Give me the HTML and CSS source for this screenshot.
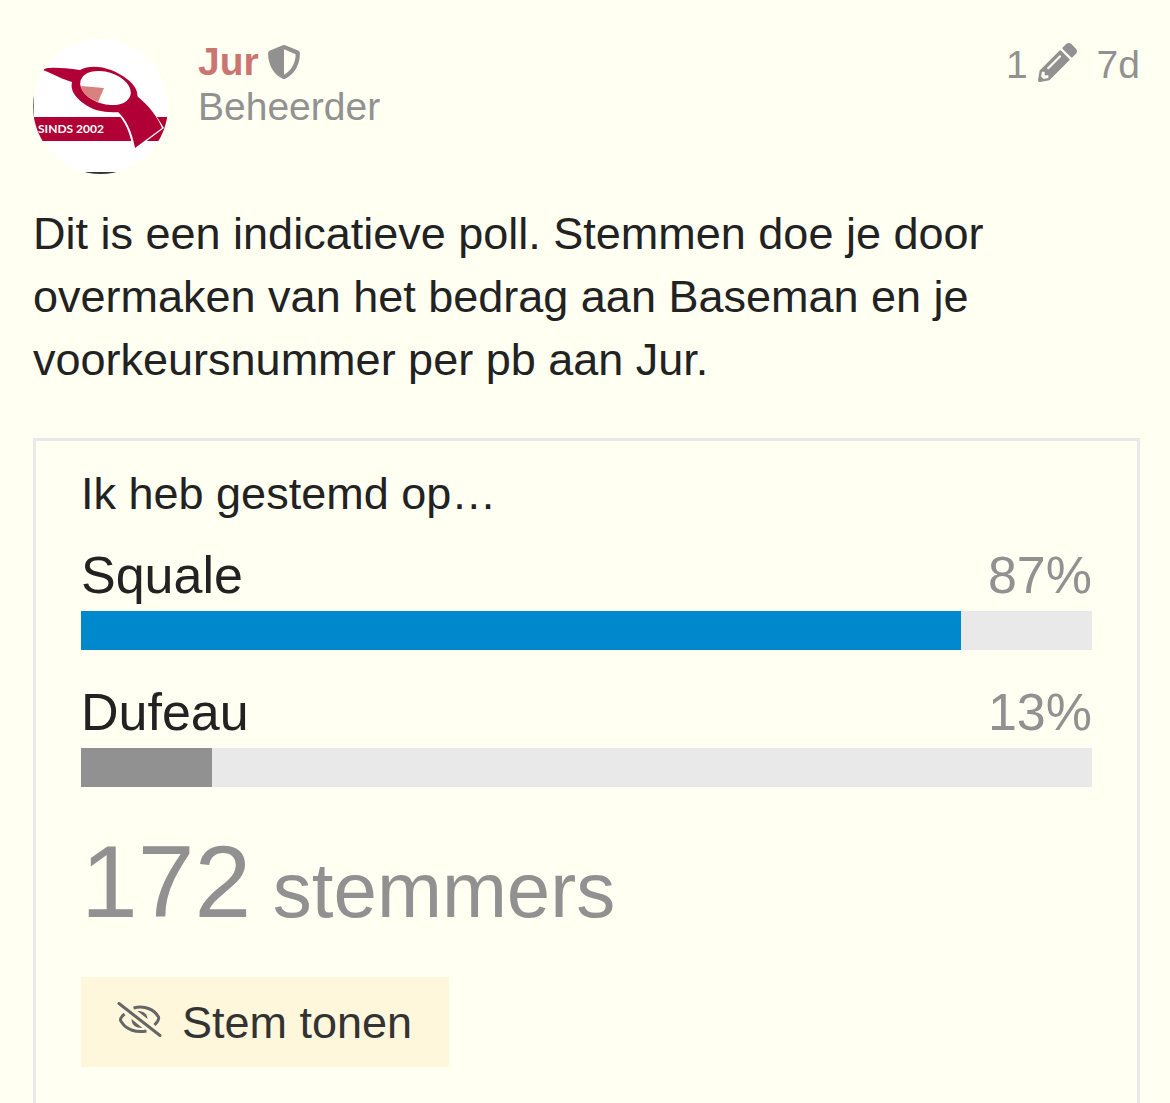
FILE: index.html
```html
<!DOCTYPE html>
<html lang="nl">
<head>
<meta charset="utf-8">
<meta name="viewport" content="width=device-width, initial-scale=1">
<title>Indicatieve poll</title>
<link rel="stylesheet" href="styles.css">
</head>
<body>
<article class="post">
  <header class="post-header">
    <svg class="avatar" viewBox="0 0 135 135" role="img" aria-label="Jur">
      <defs><clipPath id="round"><circle cx="67.500" cy="67.500" r="67.500"/></clipPath></defs>
      <g clip-path="url(#round)">
        <rect width="135" height="135" fill="#fff"/>
        <path d="M0 78H135V102H0Z" fill="#b00035"/>
        <path d="M0 55H1V78H0Z" fill="#777"/>
        <path d="M45 133H90V135H45Z" fill="#34343c"/>
        <path d="M83 73C92 82 97 93 100 110L103 110L131 89L124 78L106 58Z" fill="#fff"/>
        <path d="M84 72C94 81 99 93 102 109L129 89C124 77 116 67 104 57Z" fill="#b00035"/>
        <path d="M10 31C12 28 26 28 47 31C60 24 80 29 94 40C102 46 106 53 104 61L86 73C73 74 60 72 50 64C42 58 37 51 39 43C31 41 20 35 10 31Z" fill="#b00035"/>
        <ellipse cx="72.500" cy="49" rx="26" ry="16" transform="rotate(17 72.500 49)" fill="#fff"/>
        <path d="M48 47L71 49L65 63C57 60 49 55 48 47Z" fill="#d9827d"/>
        <text class="avatar-text" x="5" y="94">SINDS 2002</text>
      </g>
    </svg>
    <div class="author">
      <div class="author-name">
        <a class="name" href="#jur">Jur</a>
        <svg class="shield" viewBox="0 0 512 512" role="img" aria-label="Beheerder"><path fill="currentColor" d="M466.500 83.700l-192-80a48.150 48.150 0 0 0-36.900 0l-192 80C27.700 91.100 16 108.600 16 128c0 198.500 114.500 335.700 221.500 380.300 11.800 4.900 25.100 4.900 36.900 0C360.100 472.600 496 349.300 496 128c0-19.400-11.700-36.900-29.500-44.300zM256.100 446.300l-.1-381 175.900 73.300c-3.300 151.400-82.100 261.100-175.800 307.700z"/></svg>
      </div>
      <div class="role">Beheerder</div>
    </div>
    <div class="post-info">
      <button class="edits" type="button" aria-label="1 bewerking">1
        <svg class="pencil" viewBox="0 0 512 512" aria-hidden="true"><path fill="currentColor" d="M497.900 142.100l-46.100 46.100c-4.700 4.700-12.300 4.700-17 0l-111-111c-4.700-4.700-4.700-12.300 0-17l46.100-46.100c18.700-18.700 49.100-18.700 67.900 0l60.100 60.100c18.800 18.700 18.800 49.100 0 68zM284.200 99.800L21.600 362.400.4 483.900c-2.900 16.400 11.400 30.600 27.800 27.800l121.500-21.300 262.600-262.600c4.700-4.700 4.700-12.300 0-17l-111-111c-4.800-4.700-12.400-4.700-17.100 0zM124.100 339.900c-5.500-5.500-5.500-14.300 0-19.800l154-154c5.500-5.500 14.300-5.500 19.800 0s5.500 14.300 0 19.800l-154 154c-5.500 5.500-14.300 5.500-19.800 0zM88 424h48v36.300l-64.500 11.300-31.100-31.100L51.700 376H88v48z"/></svg>
      </button>
      <a class="date" href="#post">7d</a>
    </div>
  </header>
  <p class="message">Dit is een indicatieve poll. Stemmen doe je door overmaken van het bedrag aan Baseman en je voorkeursnummer per pb aan Jur.</p>
  <section class="poll">
    <h2 class="poll-title">Ik heb gestemd op…</h2>
    <ul class="results">
      <li>
        <div class="option"><span>Squale</span><span class="percentage">87%</span></div>
        <div class="bar"><div class="fill chosen" style="width:87%"></div></div>
      </li>
      <li>
        <div class="option"><span>Dufeau</span><span class="percentage">13%</span></div>
        <div class="bar"><div class="fill" style="width:13%"></div></div>
      </li>
    </ul>
    <p class="voters"><span class="count">172</span> <span class="label">stemmers</span></p>
    <button class="toggle" type="button">
      <svg class="eye" viewBox="0 0 44 36" aria-hidden="true" fill="none" stroke="currentColor" stroke-linecap="round"><path stroke-width="3" d="M1.500 1.500L42.500 33.500"/><path stroke-linecap="butt" stroke-width="3" d="M16 6C28 3 37 8 41 15Q42 18 37 23M7 12Q1 17 4 20C9 28 19 31 29 29"/><path stroke="none" fill="currentColor" d="M20 9C26 9 30 12 30 17ZM14 17L25 26C18 26 14 23 14 17Z"/></svg>
      Stem tonen
    </button>
  </section>
</article>
</body>
</html>
```

FILE: styles.css
```css
* { box-sizing: border-box; }

body {
  margin: 0;
  background: #fffff2;
  color: #222;
  font: 45px/63px "Liberation Sans", Arial, sans-serif;
}

a { color: inherit; text-decoration: none; }

button {
  border: 0;
  font: inherit;
  color: inherit;
  cursor: pointer;
}

.post {
  display: flex;
  flex-direction: column;
  min-height: 100vh;
  padding: 39px 30px 0 33px;
}

.post-header {
  display: flex;
  gap: 30px;
  color: #919191;
  font-size: 39px;
  line-height: 45px;
}

.avatar { width: 135px; height: 135px; flex: none; }

.avatar-text {
  font: bold 12px Lato, sans-serif;
  fill: #fff;
}

.author { flex: 1; }

.author-name { display: flex; align-items: center; gap: 8px; }

.name { color: #cb7572; font-weight: bold; }

.shield { width: 34px; height: 34px; }

.post-info {
  display: flex;
  align-items: center;
  align-self: flex-start;
  gap: 20px;
  padding-top: 3px;
}

.edits {
  display: flex;
  align-items: center;
  gap: 10px;
  padding: 0;
  background: none;
}

.pencil { width: 39px; height: 39px; margin-bottom: 4px; }

.message { margin: 28px 0 47px; }

.poll {
  flex: 1;
  padding: 21px 45px 36px;
  border: 3px solid #e9e9e9;
  border-bottom: 0;
}

.poll-title { margin: 0; font: inherit; }

.results {
  display: grid;
  gap: 32px;
  margin: 20px 0 0;
  padding: 0;
  list-style: none;
}

.option {
  display: flex;
  justify-content: space-between;
  padding-bottom: 5px;
  font-size: 52px;
  line-height: 61px;
}

.percentage { color: #919191; }

.bar { height: 39px; background: #e9e9e9; }

.fill { height: 100%; background: #919191; }

.chosen { background: #0088cc; }

.voters {
  margin: 36px 0 28px;
  color: #919191;
  font-size: 78px;
  line-height: 118px;
}

.count { font-size: 102px; }

.toggle {
  display: flex;
  align-items: center;
  gap: 20px;
  padding: 14px 37px 13px 36px;
  background: #fff7dc;
  color: #333;
}

.eye { width: 45px; height: 36px; margin-bottom: 6px; color: #666; }
```
